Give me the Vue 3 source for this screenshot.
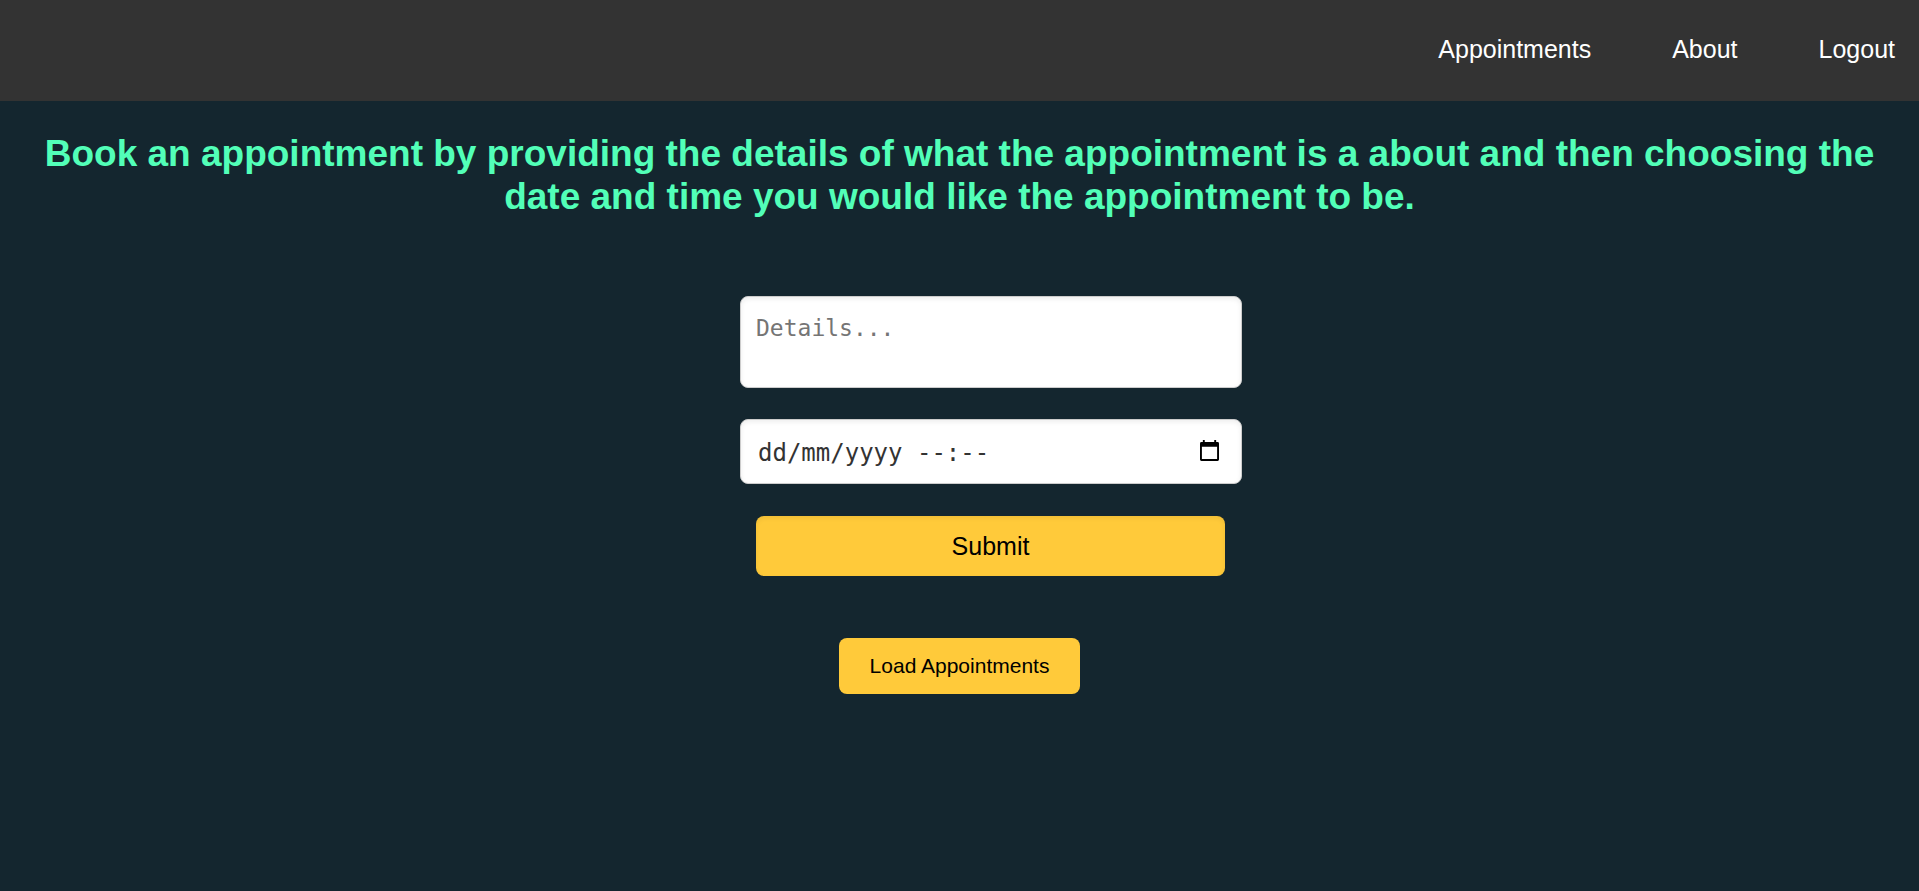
<script setup>
import { ref } from 'vue'

const links = ['Appointments', 'About', 'Logout']
const details = ref('')
const when = ref('')
</script>

<template>
  <div class="page">
    <nav class="nav">
      <a v-for="link in links" :key="link" href="#" class="nav-link">{{ link }}</a>
    </nav>
    <main class="main">
      <h1 class="title">
        Book an appointment by providing the details of what the appointment is a about and then
        choosing the date and time you would like the appointment to be.
      </h1>
      <form class="form" @submit.prevent>
        <textarea v-model="details" class="field details" placeholder="Details..." aria-label="Details"></textarea>
        <div class="field date">
          <input v-model="when" class="date-input" type="text" placeholder="dd/mm/yyyy --:--" aria-label="Date and time" />
          <button class="picker" type="button" aria-label="Open calendar">
            <svg class="calendar" viewBox="0 0 20 22" aria-hidden="true">
              <path d="M3 0h2v2h10V0h2v2h1.500Q20 2 20 3.500V20.500Q20 22 18.500 22H1.500Q0 22 0 20.500V3.500Q0 2 1.500 2H3zM2 7v13h16V7z" fill-rule="evenodd" />
            </svg>
          </button>
        </div>
        <button class="submit" type="submit">Submit</button>
      </form>
      <button class="load" type="button">Load Appointments</button>
    </main>
  </div>
</template>

<style>
body {
  margin: 0;
  background: #14262f;
}
</style>

<style scoped>
.page {
  font-family: "Liberation Sans", Arial, sans-serif;
}
.nav {
  display: flex;
  justify-content: flex-end;
  align-items: center;
  gap: 81px;
  padding: 35px 24px 37px;
  background: #333;
}
.nav-link {
  color: #fff;
  font-size: 25px;
  line-height: 29px;
  text-decoration: none;
}
.main {
  display: flex;
  flex-direction: column;
  align-items: center;
}
.title {
  margin: 31px 24px 0;
  color: #52ffb8;
  font-size: 37px;
  line-height: 43px;
  font-weight: bold;
  text-align: center;
}
.form {
  display: flex;
  flex-direction: column;
  width: 502px;
  max-width: 100%;
  margin: 78px 0 0 63px;
}
.field {
  box-sizing: border-box;
  width: 100%;
  border: 1px solid #ccc;
  border-radius: 8px;
  background: #fff;
  box-shadow: inset 0 2px 5px rgba(0, 0, 0, 0.07);
  font-family: "DejaVu Sans Mono", monospace;
  color: #333;
}
.details {
  display: block;
  height: 92px;
  padding: 17px 15px;
  font-size: 23px;
  line-height: 29px;
  resize: none;
}
.details::placeholder {
  color: #757575;
}
.date {
  display: flex;
  align-items: center;
  height: 65px;
  margin-top: 31px;
  padding: 0 22px 0 17px;
}
.date-input {
  flex: 1;
  min-width: 0;
  padding: 2px 0 0;
  border: 0;
  background: transparent;
  color: #333;
  font-family: inherit;
  font-size: 24px;
  line-height: 30px;
}
.date-input::placeholder {
  color: #333;
}
.picker {
  padding: 0 0 2px;
  border: 0;
  background: transparent;
}
.calendar {
  display: block;
  width: 19px;
  height: 21px;
}
.submit,
.load {
  border: 0;
  border-radius: 8px;
  background: #ffca3a;
  color: #000;
  font-family: inherit;
}
.submit {
  height: 60px;
  margin: 32px 17px 0 16px;
  box-shadow: inset 0 2px 5px rgba(0, 0, 0, 0.07);
  font-size: 25px;
}
.load {
  margin-top: 62px;
  padding: 16px 31px;
  font-size: 21px;
  line-height: 24px;
}
</style>
